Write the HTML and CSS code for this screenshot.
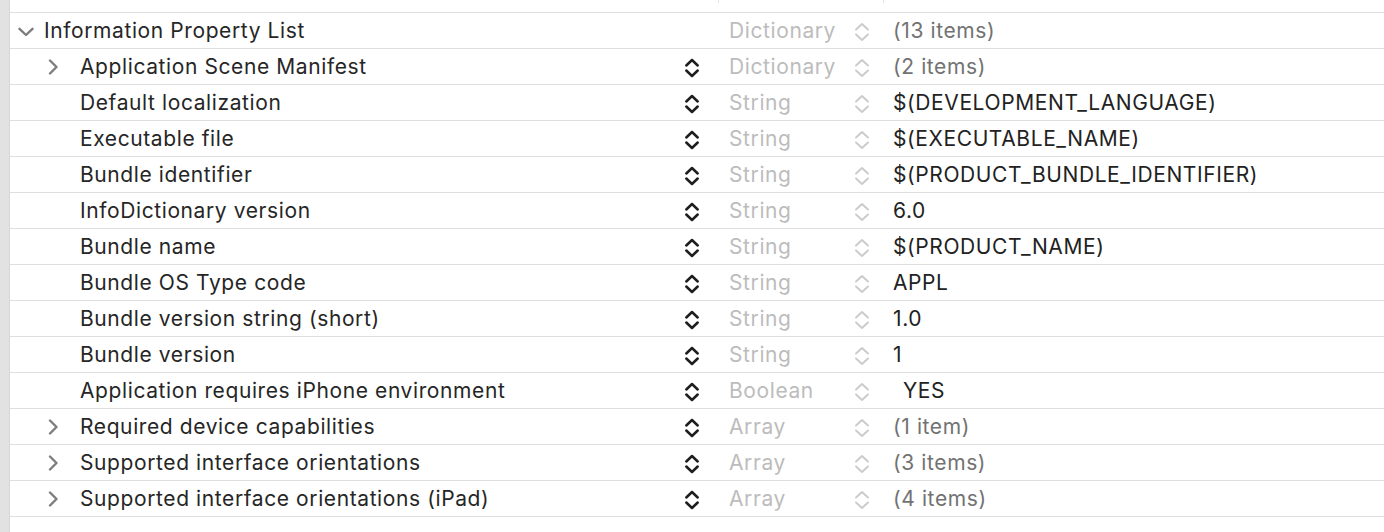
FILE: index.html
```html
<!DOCTYPE html>
<html lang="en">
<head>
<meta charset="utf-8">
<title>Info.plist</title>
<link rel="stylesheet" href="styles.css">
</head>
<body>
<div class="app">
  <aside class="gutter"></aside>
  <main class="editor">
    <div class="header">
      <span class="hcol hkey"></span>
      <span class="hcol htype"></span>
    </div>
    <div class="rows">
      <div class="row l0">
        <div class="key"><span class="twisty"><svg class="chev-down" width="16" height="10" viewBox="0 0 16 10"><path d="M1.5 1.8 L8 8 L14.5 1.8"/></svg></span><span class="name">Information Property List</span></div>
        <div class="kstep"></div>
        <div class="type">Dictionary</div>
        <div class="tstep"><svg class="step light" width="18" height="22" viewBox="0 0 18 22"><path d="M3 8.5 L9 3 L15 8.5 M3 13.5 L9 19 L15 13.5"/></svg></div>
        <div class="value muted">(13 items)</div>
      </div>

      <div class="row l1">
        <div class="key"><span class="twisty"><svg class="chev-right" width="12" height="16" viewBox="0 0 12 16"><path d="M2 1.5 L8.5 8 L2 14.5"/></svg></span><span class="name">Application Scene Manifest</span></div>
        <div class="kstep"><svg class="step dark" width="16" height="22" viewBox="0 0 16 22"><path d="M2.3 8.5 L8 3 L13.7 8.5 M2.3 13.5 L8 19 L13.7 13.5"/></svg></div>
        <div class="type">Dictionary</div>
        <div class="tstep"><svg class="step light" width="18" height="22" viewBox="0 0 18 22"><path d="M3 8.5 L9 3 L15 8.5 M3 13.5 L9 19 L15 13.5"/></svg></div>
        <div class="value muted">(2 items)</div>
      </div>

      <div class="row l1">
        <div class="key"><span class="twisty"></span><span class="name">Default localization</span></div>
        <div class="kstep"><svg class="step dark" width="16" height="22" viewBox="0 0 16 22"><path d="M2.3 8.5 L8 3 L13.7 8.5 M2.3 13.5 L8 19 L13.7 13.5"/></svg></div>
        <div class="type">String</div>
        <div class="tstep"><svg class="step light" width="18" height="22" viewBox="0 0 18 22"><path d="M3 8.5 L9 3 L15 8.5 M3 13.5 L9 19 L15 13.5"/></svg></div>
        <div class="value">$(DEVELOPMENT_LANGUAGE)</div>
      </div>

      <div class="row l1">
        <div class="key"><span class="twisty"></span><span class="name">Executable file</span></div>
        <div class="kstep"><svg class="step dark" width="16" height="22" viewBox="0 0 16 22"><path d="M2.3 8.5 L8 3 L13.7 8.5 M2.3 13.5 L8 19 L13.7 13.5"/></svg></div>
        <div class="type">String</div>
        <div class="tstep"><svg class="step light" width="18" height="22" viewBox="0 0 18 22"><path d="M3 8.5 L9 3 L15 8.5 M3 13.5 L9 19 L15 13.5"/></svg></div>
        <div class="value">$(EXECUTABLE_NAME)</div>
      </div>

      <div class="row l1">
        <div class="key"><span class="twisty"></span><span class="name">Bundle identifier</span></div>
        <div class="kstep"><svg class="step dark" width="16" height="22" viewBox="0 0 16 22"><path d="M2.3 8.5 L8 3 L13.7 8.5 M2.3 13.5 L8 19 L13.7 13.5"/></svg></div>
        <div class="type">String</div>
        <div class="tstep"><svg class="step light" width="18" height="22" viewBox="0 0 18 22"><path d="M3 8.5 L9 3 L15 8.5 M3 13.5 L9 19 L15 13.5"/></svg></div>
        <div class="value">$(PRODUCT_BUNDLE_IDENTIFIER)</div>
      </div>

      <div class="row l1">
        <div class="key"><span class="twisty"></span><span class="name">InfoDictionary version</span></div>
        <div class="kstep"><svg class="step dark" width="16" height="22" viewBox="0 0 16 22"><path d="M2.3 8.5 L8 3 L13.7 8.5 M2.3 13.5 L8 19 L13.7 13.5"/></svg></div>
        <div class="type">String</div>
        <div class="tstep"><svg class="step light" width="18" height="22" viewBox="0 0 18 22"><path d="M3 8.5 L9 3 L15 8.5 M3 13.5 L9 19 L15 13.5"/></svg></div>
        <div class="value">6.0</div>
      </div>

      <div class="row l1">
        <div class="key"><span class="twisty"></span><span class="name">Bundle name</span></div>
        <div class="kstep"><svg class="step dark" width="16" height="22" viewBox="0 0 16 22"><path d="M2.3 8.5 L8 3 L13.7 8.5 M2.3 13.5 L8 19 L13.7 13.5"/></svg></div>
        <div class="type">String</div>
        <div class="tstep"><svg class="step light" width="18" height="22" viewBox="0 0 18 22"><path d="M3 8.5 L9 3 L15 8.5 M3 13.5 L9 19 L15 13.5"/></svg></div>
        <div class="value">$(PRODUCT_NAME)</div>
      </div>

      <div class="row l1">
        <div class="key"><span class="twisty"></span><span class="name">Bundle OS Type code</span></div>
        <div class="kstep"><svg class="step dark" width="16" height="22" viewBox="0 0 16 22"><path d="M2.3 8.5 L8 3 L13.7 8.5 M2.3 13.5 L8 19 L13.7 13.5"/></svg></div>
        <div class="type">String</div>
        <div class="tstep"><svg class="step light" width="18" height="22" viewBox="0 0 18 22"><path d="M3 8.5 L9 3 L15 8.5 M3 13.5 L9 19 L15 13.5"/></svg></div>
        <div class="value">APPL</div>
      </div>

      <div class="row l1">
        <div class="key"><span class="twisty"></span><span class="name">Bundle version string (short)</span></div>
        <div class="kstep"><svg class="step dark" width="16" height="22" viewBox="0 0 16 22"><path d="M2.3 8.5 L8 3 L13.7 8.5 M2.3 13.5 L8 19 L13.7 13.5"/></svg></div>
        <div class="type">String</div>
        <div class="tstep"><svg class="step light" width="18" height="22" viewBox="0 0 18 22"><path d="M3 8.5 L9 3 L15 8.5 M3 13.5 L9 19 L15 13.5"/></svg></div>
        <div class="value">1.0</div>
      </div>

      <div class="row l1">
        <div class="key"><span class="twisty"></span><span class="name">Bundle version</span></div>
        <div class="kstep"><svg class="step dark" width="16" height="22" viewBox="0 0 16 22"><path d="M2.3 8.5 L8 3 L13.7 8.5 M2.3 13.5 L8 19 L13.7 13.5"/></svg></div>
        <div class="type">String</div>
        <div class="tstep"><svg class="step light" width="18" height="22" viewBox="0 0 18 22"><path d="M3 8.5 L9 3 L15 8.5 M3 13.5 L9 19 L15 13.5"/></svg></div>
        <div class="value">1</div>
      </div>

      <div class="row l1">
        <div class="key"><span class="twisty"></span><span class="name">Application requires iPhone environment</span></div>
        <div class="kstep"><svg class="step dark" width="16" height="22" viewBox="0 0 16 22"><path d="M2.3 8.5 L8 3 L13.7 8.5 M2.3 13.5 L8 19 L13.7 13.5"/></svg></div>
        <div class="type">Boolean</div>
        <div class="tstep"><svg class="step light" width="18" height="22" viewBox="0 0 18 22"><path d="M3 8.5 L9 3 L15 8.5 M3 13.5 L9 19 L15 13.5"/></svg></div>
        <div class="value bool">YES</div>
      </div>

      <div class="row l1">
        <div class="key"><span class="twisty"><svg class="chev-right" width="12" height="16" viewBox="0 0 12 16"><path d="M2 1.5 L8.5 8 L2 14.5"/></svg></span><span class="name">Required device capabilities</span></div>
        <div class="kstep"><svg class="step dark" width="16" height="22" viewBox="0 0 16 22"><path d="M2.3 8.5 L8 3 L13.7 8.5 M2.3 13.5 L8 19 L13.7 13.5"/></svg></div>
        <div class="type">Array</div>
        <div class="tstep"><svg class="step light" width="18" height="22" viewBox="0 0 18 22"><path d="M3 8.5 L9 3 L15 8.5 M3 13.5 L9 19 L15 13.5"/></svg></div>
        <div class="value muted">(1 item)</div>
      </div>

      <div class="row l1">
        <div class="key"><span class="twisty"><svg class="chev-right" width="12" height="16" viewBox="0 0 12 16"><path d="M2 1.5 L8.5 8 L2 14.5"/></svg></span><span class="name">Supported interface orientations</span></div>
        <div class="kstep"><svg class="step dark" width="16" height="22" viewBox="0 0 16 22"><path d="M2.3 8.5 L8 3 L13.7 8.5 M2.3 13.5 L8 19 L13.7 13.5"/></svg></div>
        <div class="type">Array</div>
        <div class="tstep"><svg class="step light" width="18" height="22" viewBox="0 0 18 22"><path d="M3 8.5 L9 3 L15 8.5 M3 13.5 L9 19 L15 13.5"/></svg></div>
        <div class="value muted">(3 items)</div>
      </div>

      <div class="row l1">
        <div class="key"><span class="twisty"><svg class="chev-right" width="12" height="16" viewBox="0 0 12 16"><path d="M2 1.5 L8.5 8 L2 14.5"/></svg></span><span class="name">Supported interface orientations (iPad)</span></div>
        <div class="kstep"><svg class="step dark" width="16" height="22" viewBox="0 0 16 22"><path d="M2.3 8.5 L8 3 L13.7 8.5 M2.3 13.5 L8 19 L13.7 13.5"/></svg></div>
        <div class="type">Array</div>
        <div class="tstep"><svg class="step light" width="18" height="22" viewBox="0 0 18 22"><path d="M3 8.5 L9 3 L15 8.5 M3 13.5 L9 19 L15 13.5"/></svg></div>
        <div class="value muted">(4 items)</div>
      </div>
    </div>
  </main>
</div>
</body>
</html>
```

FILE: styles.css
```css
* { box-sizing: border-box; }

html, body {
  margin: 0;
  padding: 0;
  background: #ffffff;
}

body {
  font-family: "Inter", "Liberation Sans", sans-serif;
  font-size: 21px;
  letter-spacing: 0.6px;
  color: #262626;
  -webkit-font-smoothing: antialiased;
}

.app {
  display: flex;
  height: 532px;
  overflow: hidden;
}

.gutter {
  flex: 0 0 10px;
  background: #e2e2e2;
  border-right: 1px solid #d5d5d5;
}

.editor {
  flex: 1;
  display: flex;
  flex-direction: column;
}

.header {
  height: 12px;
  display: flex;
  align-items: flex-start;
}

.hcol {
  height: 3px;
  border-right: 1px solid #e2e2e2;
}

.hkey { width: 709px; }
.htype { width: 165px; }

.rows {
  border-bottom: 1px solid #dfdfdf;
}

.row {
  display: grid;
  grid-template-columns: 674px 45px 124px 40px 1fr;
  align-items: center;
  height: 36px;
  border-top: 1px solid #dfdfdf;
  white-space: nowrap;
}

.key {
  display: flex;
  align-items: center;
  height: 100%;
}

.l0 .key { padding-left: 8px; }
.l0 .twisty { width: 26px; }
.l1 .key { padding-left: 38px; }
.l1 .twisty { width: 32px; }

.twisty {
  display: flex;
  align-items: center;
  height: 100%;
}

.chev-down,
.chev-right {
  fill: none;
  stroke: #7d7d7d;
  stroke-width: 2.4;
  stroke-linecap: round;
  stroke-linejoin: round;
}

.chev-down { margin-top: 3px; }
.chev-right { margin-top: 1px; }

.kstep,
.tstep {
  display: flex;
  align-items: center;
  height: 100%;
  padding-top: 3px;
}

.step {
  fill: none;
  stroke-linecap: round;
  stroke-linejoin: round;
}

.step.dark {
  stroke: #1e1e1e;
  stroke-width: 2.5;
}

.step.light {
  stroke: #cbcbcb;
  stroke-width: 1.9;
}

.type {
  color: #bcbcbc;
}

.value {
  color: #222222;
}

.value.muted {
  color: #727272;
}

.value.bool {
  padding-left: 10px;
}
```
